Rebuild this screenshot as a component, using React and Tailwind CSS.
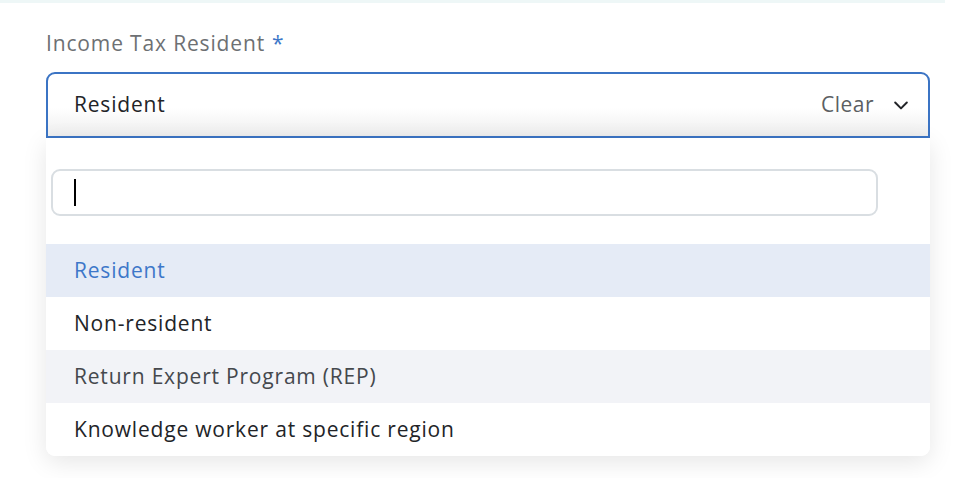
import React from 'react';

const options = [
  { label: 'Resident', row: 'bg-[#e5ebf6]', text: 'text-[#3d77c9]' },
  { label: 'Non-resident', row: 'bg-white', text: 'text-[#222428]' },
  { label: 'Return Expert Program (REP)', row: 'bg-[#f2f3f7]', text: 'text-[#45484d]' },
  { label: 'Knowledge worker at specific region', row: 'bg-white', text: 'text-[#222428]' },
];

const App = () => {
  return (
    <div className="w-[978px] h-[478px] bg-white overflow-hidden font-['Open_Sans',sans-serif] tracking-[0.8px]">
      {/* top divider */}
      <div className="h-[3px] w-[945px] bg-[#eef7f7]"></div>

      <div className="px-[46px] w-[930px] box-content">
        {/* Label */}
        <div className="mt-[28px] h-[26px] flex items-center text-[21px] font-medium text-[#6d7073] tracking-[0.85px]">
          Income Tax Resident
          <span className="ml-[7px] text-[#3d77c9]">*</span>
        </div>

        {/* Select control */}
        <div className="mt-[15px] w-[884px] h-[66px] border-2 border-[#3b74c4] rounded-t-[9px] bg-[linear-gradient(to_bottom,#ffffff_55%,#eeeeee)] flex items-center pl-[26px] pr-[17px]">
          <span className="flex-1 text-[21px] text-[#222428]">Resident</span>
          <span className="text-[21px] text-[#5c5f63] tracking-[0.5px]">Clear</span>
          <svg className="ml-[17px]" width="20" height="20" viewBox="0 0 24 24" fill="none" stroke="#222428" strokeWidth="2.4" strokeLinecap="round" strokeLinejoin="round">
            <path d="M5 9l7 7 7-7" />
          </svg>
        </div>

        {/* Dropdown */}
        <div className="w-[884px] bg-white rounded-b-[9px] overflow-hidden shadow-[0_6px_24px_rgba(0,0,0,0.10)]">
          <div className="pt-[31px] pb-[28px] pl-[5px]">
            <div className="w-[827px] h-[47px] border-2 border-[#d9dee2] rounded-[9px] flex items-center pl-[21px]">
              <div className="w-[2px] h-[27px] bg-black"></div>
            </div>
          </div>
          {options.map((o) => (
            <div key={o.label} className={`h-[53px] flex items-center pl-[28px] ${o.row}`}>
              <span className={`text-[21px] ${o.text}`}>{o.label}</span>
            </div>
          ))}
        </div>
      </div>
    </div>
  );
};

export default App;
